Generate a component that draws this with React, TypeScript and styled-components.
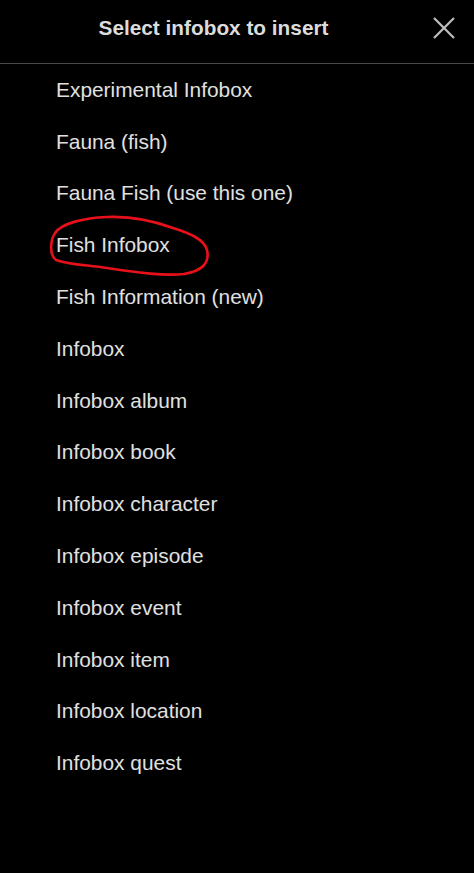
import React from "react";
import styled, { createGlobalStyle } from "styled-components";

const Global = createGlobalStyle`
  html, body { margin: 0; padding: 0; background: #000; }
  body { font-family: "Liberation Sans", Arial, sans-serif; }
`;

const Panel = styled.div`
  width: 474px;
  height: 873px;
  background: #000;
  color: #dedede;
  display: flex;
  flex-direction: column;
`;

const Header = styled.div`
  height: 64px;
  border-bottom: 1px solid #4a4a4a;
  display: flex;
  align-items: center;
  padding: 0 13px 7px 0;
  box-sizing: border-box;
`;

const Title = styled.h1`
  flex: 1;
  margin: 0;
  text-align: center;
  font-size: 20.8px;
  font-weight: 700;
  color: #dcdcdc;
`;

const CloseButton = styled.button`
  width: 34px;
  height: 34px;
  padding: 0;
  border: 0;
  background: transparent;
  display: flex;
  align-items: center;
  justify-content: center;
  color: #bdbdbd;
`;

const List = styled.ul`
  list-style: none;
  margin: 0;
  padding: 0;
`;

const Item = styled.li`
  position: relative;
  height: 51.8px;
  display: flex;
  align-items: center;
  padding-left: 56px;
  font-size: 20.9px;
  color: #e0e0e0;
`;

const Scribble = styled.svg`
  position: absolute;
  left: 44px;
  top: -6px;
  width: 170px;
  height: 66px;
  pointer-events: none;
`;

const items = [
  "Experimental Infobox",
  "Fauna (fish)",
  "Fauna Fish (use this one)",
  "Fish Infobox",
  "Fish Information (new)",
  "Infobox",
  "Infobox album",
  "Infobox book",
  "Infobox character",
  "Infobox episode",
  "Infobox event",
  "Infobox item",
  "Infobox location",
  "Infobox quest",
];

export default function App() {
  return (
    <>
      <Global />
      <Panel>
        <Header>
          <Title>Select infobox to insert</Title>
          <CloseButton aria-label="Close">
            <svg width="22" height="22" viewBox="0 0 22 22">
              <path d="M1 1 L21 21 M21 1 L1 21" stroke="currentColor" strokeWidth="2.2" fill="none" />
            </svg>
          </CloseButton>
        </Header>
        <List>
          {items.map((t) => (
            <Item key={t}>
              {t}
              {t === "Fish Infobox" && (
                <Scribble viewBox="0 0 170 66">
                  <path
                    d="M11 20 C18 10, 40 5, 63 4 C85 3, 110 8, 129 15 C145 20, 160 26, 163 37 C166 50, 158 58, 140 61 C120 63, 96 60, 63 55 C45 52, 25 52, 12 47 C5 42, 6 26, 12 19"
                    stroke="#e8101a"
                    strokeWidth="2.6"
                    fill="none"
                    strokeLinecap="round"
                    strokeLinejoin="round"
                  />
                </Scribble>
              )}
            </Item>
          ))}
        </List>
      </Panel>
    </>
  );
}
